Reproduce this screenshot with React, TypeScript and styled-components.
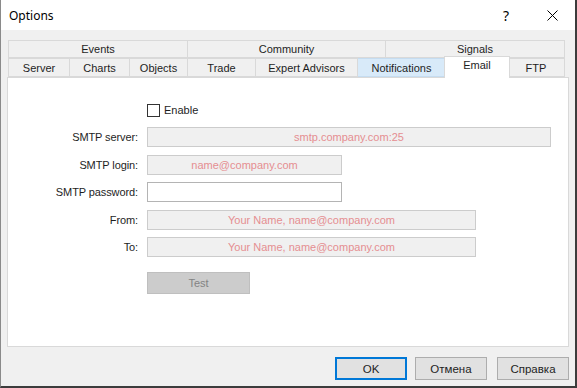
import React from 'react'
import styled, { createGlobalStyle, css } from 'styled-components'

const GlobalStyle = createGlobalStyle`
  html, body {
    margin: 0;
    padding: 0;
    background: #2b2b2b;
  }
  * {
    box-sizing: border-box;
  }
`

const ui = `'Liberation Sans', Arial, sans-serif`

export const Window = styled.div`
  width: 577px;
  height: 388px;
  display: flex;
  flex-direction: column;
  background: #f0f0f0;
  border-left: 1px solid #8a8a8a;
  border-right: 2px solid #3c3c3c;
  border-bottom: 2px solid #3c3c3c;
  font-family: ${ui};
  font-size: 11px;
  color: #1e1e1e;
`

export const TitleBar = styled.div`
  height: 30px;
  background: #fff;
  display: flex;
  align-items: center;
  padding-left: 8px;
  font-family: 'Noto Sans', 'Open Sans', sans-serif;
  font-size: 12px;
  color: #000;
`

export const Title = styled.span`
  flex: 1;
`

export const TitleButton = styled.div`
  width: 46px;
  height: 30px;
  display: flex;
  align-items: center;
  justify-content: center;
  font-size: 14px;
`

export const Body = styled.div`
  flex: 1;
  display: flex;
  flex-direction: column;
  padding: 10px 6px 0 6px;
`

export const TabRow = styled.div<{ height: number }>`
  display: flex;
  height: ${p => p.height}px;
  margin-left: 1px;
`

interface TabProps {
  width: number
  active?: boolean
  hover?: boolean
}

export const Tab = styled.div<TabProps>`
  width: ${p => p.width}px;
  display: flex;
  align-items: center;
  justify-content: center;
  background: #f0f0f0;
  border: 1px solid #d9d9d9;
  border-left: none;
  &:first-child {
    border-left: 1px solid #d9d9d9;
  }
  ${p =>
    p.hover &&
    css`
      background: #d8eaf9;
      border-color: #c5dcf0;
    `}
  ${p =>
    p.active &&
    css`
      position: relative;
      z-index: 1;
      background: #fff;
      border: 1px solid #d9d9d9;
      border-bottom: none;
      margin: -2px -2px -1px -2px;
      width: ${p.width + 4}px;
      padding-bottom: 5px;
    `}
`

export const Panel = styled.div`
  height: 270px;
  background: #fff;
  border: 1px solid #d9d9d9;
  padding-top: 25px;
  display: flex;
  flex-direction: column;
  gap: 7.5px;
`

export const FormRow = styled.div<{ spaced?: number }>`
  display: grid;
  grid-template-columns: 130px 1fr;
  column-gap: 9px;
  align-items: center;
  margin-bottom: ${p => p.spaced || 0}px;
`

export const Label = styled.div`
  text-align: right;
  letter-spacing: -0.1px;
`

export const CheckLine = styled.label`
  display: flex;
  align-items: center;
  gap: 4px;
  height: 14px;
`

export const Box = styled.span`
  width: 13px;
  height: 13px;
  border: 1px solid #333;
  background: #fff;
`

export const Field = styled.div<{ width: number; disabled?: boolean }>`
  width: ${p => p.width}px;
  height: 20px;
  display: flex;
  align-items: center;
  justify-content: center;
  border: 1px solid ${p => (p.disabled ? '#cccccc' : '#b4b4b4')};
  background: ${p => (p.disabled ? '#f0f0f0' : '#fff')};
  color: #e58e91;
  font-size: 11px;
`

export const TestButton = styled.div`
  width: 103px;
  height: 22px;
  display: flex;
  align-items: center;
  justify-content: center;
  background: #cccccc;
  border: 1px solid #bfbfbf;
  color: #838383;
  margin-top: 7.5px;
`

export const Footer = styled.div`
  display: flex;
  justify-content: flex-end;
  gap: 8px;
  padding: 10px 0 0 0;
`

export const Button = styled.div<{ primary?: boolean }>`
  width: 72px;
  height: 23px;
  display: flex;
  align-items: center;
  justify-content: center;
  background: #e1e1e1;
  border: 1px solid ${p => (p.primary ? '#0078d7' : '#adadad')};
  box-shadow: ${p => (p.primary ? 'inset 0 0 0 1px #0078d7' : 'none')};
  font-size: 11.5px;
  &:last-child {
    margin-left: 2px;
  }
`

const topTabs: [string, number][] = [
  ['Events', 180],
  ['Community', 198],
  ['Signals', 179],
]

const bottomTabs: [string, number][] = [
  ['Server', 62],
  ['Charts', 60],
  ['Objects', 58],
  ['Trade', 68],
  ['Expert Advisors', 102],
  ['Notifications', 88],
  ['Email', 62],
  ['FTP', 57],
]

const CloseIcon = () => (
  <svg width="11" height="11" viewBox="0 0 11 11">
    <path d="M0.5 0.5 L10.5 10.5 M10.5 0.5 L0.5 10.5" stroke="#000" strokeWidth="1" fill="none" />
  </svg>
)

export default function App() {
  return (
    <>
      <GlobalStyle />
      <Window>
        <TitleBar>
          <Title>Options</Title>
          <TitleButton>?</TitleButton>
          <TitleButton>
            <CloseIcon />
          </TitleButton>
        </TitleBar>
        <Body>
          <TabRow height={18}>
            {topTabs.map(([name, w]) => (
              <Tab key={name} width={w}>
                {name}
              </Tab>
            ))}
          </TabRow>
          <TabRow height={19}>
            {bottomTabs.map(([name, w]) => (
              <Tab key={name} width={w} active={name === 'Email'} hover={name === 'Notifications'}>
                {name}
              </Tab>
            ))}
          </TabRow>
          <Panel>
            <FormRow spaced={2.5}>
              <span />
              <CheckLine>
                <Box />
                Enable
              </CheckLine>
            </FormRow>
            <FormRow>
              <Label>SMTP server:</Label>
              <Field width={404} disabled>
                smtp.company.com:25
              </Field>
            </FormRow>
            <FormRow>
              <Label>SMTP login:</Label>
              <Field width={195} disabled>
                name@company.com
              </Field>
            </FormRow>
            <FormRow>
              <Label>SMTP password:</Label>
              <Field width={195} />
            </FormRow>
            <FormRow>
              <Label>From:</Label>
              <Field width={329} disabled>
                Your Name, name@company.com
              </Field>
            </FormRow>
            <FormRow>
              <Label>To:</Label>
              <Field width={329} disabled>
                Your Name, name@company.com
              </Field>
            </FormRow>
            <FormRow>
              <span />
              <TestButton>Test</TestButton>
            </FormRow>
          </Panel>
          <Footer>
            <Button primary>OK</Button>
            <Button>Отмена</Button>
            <Button>Справка</Button>
          </Footer>
        </Body>
      </Window>
    </>
  )
}
